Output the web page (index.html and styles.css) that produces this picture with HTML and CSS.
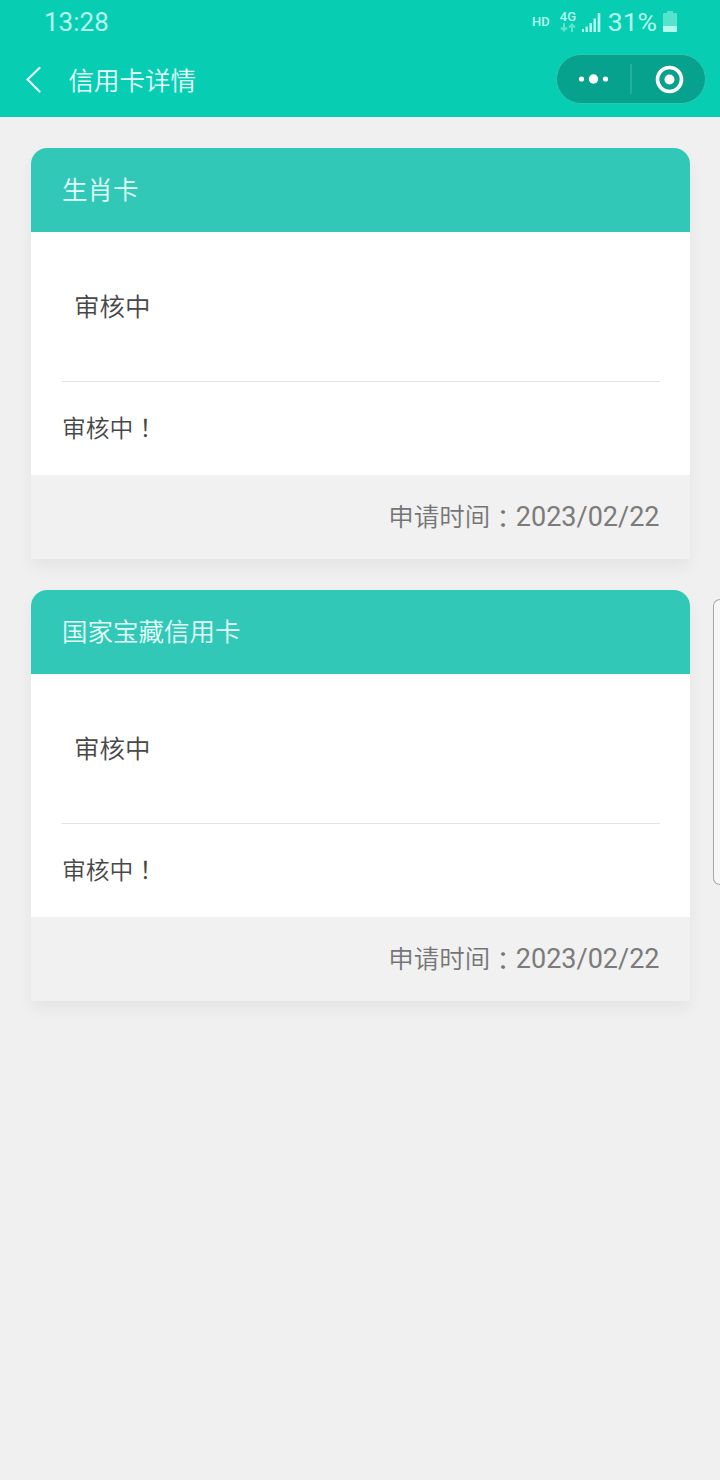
FILE: index.html
```html
<!DOCTYPE html>
<html lang="zh-CN">
<head>
<meta charset="utf-8">
<title>信用卡详情</title>
<link rel="stylesheet" href="styles.css">
</head>
<body>
<header class="top">
  <div class="status">
    <span class="clock">13:28</span>
    <div class="indicators">
      <span class="hd">HD</span>
      <div class="network">
        <span>4G</span>
        <svg width="16" height="9" viewBox="0 0 16 9" fill="none" stroke="currentColor" stroke-width="2"><path d="M4 0v7M1 4.500l3 3 3-3M12 9V2M9 4.500l3-3 3 3"/></svg>
      </div>
      <svg class="signal" width="20" height="20" viewBox="0 0 20 20" fill="currentColor"><path d="M1 16h2v3H1zM4.600 13.500h2.200V19H4.600zM8.500 10h2.400v9H8.500zM12.500 5.500H15V19h-2.500zM16.700 0h2.600v19h-2.600z"/></svg>
      <span class="percent">31%</span>
      <svg class="battery" width="14" height="22" viewBox="0 0 14 22" fill="currentColor"><path opacity=".45" d="M1 2h3V0h6v2h3q1 0 1 1v12H0V3q0-1 1-1z"/><path d="M0 15h14v5q0 1-1 1H1q-1 0-1-1z"/></svg>
    </div>
  </div>
  <nav class="nav">
    <svg class="back" width="16" height="28" viewBox="0 0 16 28" fill="none" stroke="currentColor" stroke-width="2.200" stroke-linecap="round"><path d="M13.500 2L1.500 13.500l12 12"/></svg>
    <h1 class="title">信用卡详情</h1>
    <div class="capsule">
      <svg width="148" height="48" viewBox="0 0 148 48" fill="#fff"><circle cx="24.500" cy="24" r="2.600"/><circle cx="36.500" cy="24" r="4.700"/><circle cx="48.500" cy="24" r="2.600"/><path d="M73.500 9h1v30h-1z" opacity=".25"/><circle cx="112.500" cy="24.500" r="12" fill="none" stroke="#fff" stroke-width="3.600"/><circle cx="112.500" cy="24.500" r="5"/></svg>
    </div>
  </nav>
</header>
<main class="cards">
  <section class="card">
    <h2 class="card-title">生肖卡</h2>
    <div class="card-body">
      <div class="state">审核中</div>
      <div class="message">审核中<span class="punct" lang="zh-TW">！</span></div>
    </div>
    <div class="card-foot">申请时间<span class="punct colon" lang="zh-TW">：</span><span class="date">2023/02/22</span></div>
  </section>
  <section class="card">
    <h2 class="card-title">国家宝藏信用卡</h2>
    <div class="card-body">
      <div class="state">审核中</div>
      <div class="message">审核中<span class="punct" lang="zh-TW">！</span></div>
    </div>
    <div class="card-foot">申请时间<span class="punct colon" lang="zh-TW">：</span><span class="date">2023/02/22</span></div>
  </section>
</main>
<div class="edge-handle"></div>
</body>
</html>
```
FILE: styles.css
```css
* { box-sizing: border-box; }
body {
  margin: 0;
  min-height: 1480px;
  background: #f0f0f0;
  font-family: Roboto, "Noto Sans CJK SC", sans-serif;
  font-weight: 350;
  overflow-x: hidden;
}
h1, h2 { margin: 0; font-weight: inherit; }
svg { display: block; flex: none; }
.top { height: 116.500px; background: #07ceb2; color: #e8fffb; }
.status {
  height: 44px;
  display: flex;
  justify-content: space-between;
  padding: 0 43px 0 44px;
  color: #b5fcef;
}
.clock { font-size: 26px; line-height: 45px; font-weight: 400; }
.indicators { display: flex; align-items: flex-start; }
.hd { font-size: 13px; line-height: 15px; font-weight: 500; margin: 13.500px 10px 0 0; }
.network { width: 17px; margin: 9.500px 4px 0 0; font-size: 13px; line-height: 13px; font-weight: 500; }
.network svg { color: #5ce3cc; }
.signal { margin: 13px 7px 0 0; }
.percent { font-size: 26.500px; line-height: 43px; font-weight: 400; margin-right: 6px; }
.battery { margin-top: 11px; }
.nav { height: 72px; display: flex; align-items: center; padding: 0 14px 0 26px; }
.title { margin-left: 26.500px; font-size: 25.500px; line-height: 36px; margin-top: 1px; }
.capsule {
  width: 150px;
  height: 50px;
  margin-left: auto;
  margin-top: -2px;
  border: 1px solid #2fc6b0;
  border-radius: 25px;
  background: #07a28d;
}
.cards { display: flex; flex-direction: column; gap: 30.500px; padding: 31px 30px 0 31px; }
.card {
  border-radius: 16px 16px 0 0;
  background: #fff;
  box-shadow: 0 8px 16px rgba(0, 0, 0, .05);
}
.card-title {
  height: 84.500px;
  padding-left: 31px;
  border-radius: 16px 16px 0 0;
  background: #32c8b7;
  color: #e3fffa;
  font-size: 25.500px;
  line-height: 84px;
}
.card-body { padding: 0 30px; color: #484848; }
.state {
  height: 150px;
  padding-left: 13px;
  border-bottom: 1.500px solid #e4e4e4;
  font-size: 25.500px;
  line-height: 150px;
}
.message { height: 92.500px; padding-left: 1px; font-size: 23.800px; line-height: 95px; }
.punct { font-family: "Noto Sans CJK TC", sans-serif; font-weight: 400; line-height: 1; }
.colon { vertical-align: -2px; }
.card-foot {
  height: 84.500px;
  padding-right: 30.500px;
  background: #f1f1f1;
  color: #757575;
  font-size: 25.500px;
  line-height: 84.500px;
  text-align: right;
}
.date { font-size: 27px; font-weight: 400; color: #7b7b7b; line-height: 1; }
.edge-handle {
  position: absolute;
  top: 599px;
  right: 0;
  width: 7px;
  height: 286px;
  border: 1.500px solid #a8a8a8;
  border-right: 0;
  border-radius: 7px 0 0 7px;
  background: #f7f7f7;
}
```
